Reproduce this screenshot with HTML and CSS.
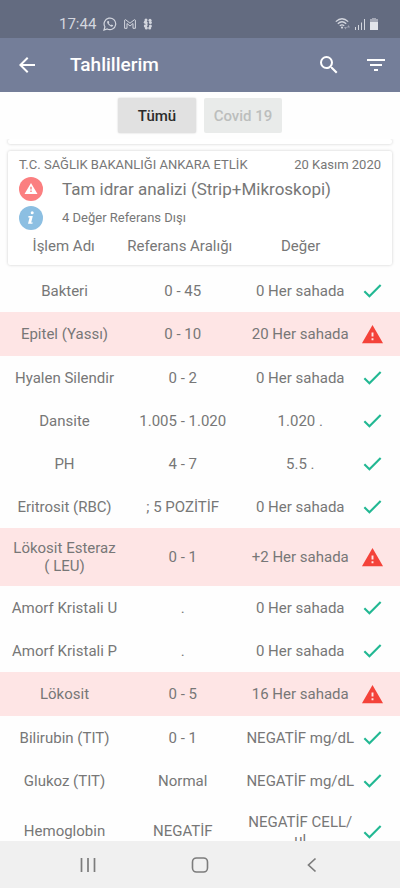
FILE: index.html
```
<!DOCTYPE html>
<html lang="tr">
<head>
    <meta charset="utf-8">
    <meta name="viewport" content="width=device-width, initial-scale=1">
    <title>Tahlillerim</title>
    <link rel="stylesheet" href="styles.css">
</head>

<body>
    <svg class="sprite" aria-hidden="true">
        <symbol id="check" viewBox="0 0 24 24">
            <path d="M3.500 12.800L8.800 18 20.500 6.300" fill="none" stroke="#22b893" stroke-width="2.200"/>
        </symbol>
        <symbol id="warning" viewBox="0 0 24 24">
            <path d="M1 21h22L12 2 1 21zm12-3h-2v-2h2v2zm0-4h-2v-4h2v4z" fill="#f4433a"/>
        </symbol>
    </svg>

    <div class="statusbar">
        <span class="time">17:44</span>
        <svg class="status-icon" width="14" height="14" viewBox="0 0 14 14">
            <path d="M1 13l.9-3.2A5.8 5.8 0 1 1 4.2 12z" fill="none" stroke="#d3d6de" stroke-width="1.2"/>
            <path d="M4.6 3.9c-.8.8-.6 2 .8 3.7 1.6 1.8 3.2 2.5 4.2 1.7.6-.5.6-.9.4-1.1L8.700 7.500l-.8.8C7 8 6 7 5.700 6.100l.6-.7-.6-1.500z" fill="#d3d6de"/>
        </svg>
        <svg class="status-icon" width="12" height="10" viewBox="0 0 12 10">
            <path d="M.6 9.300V1.200L1.600.7 6 4.200 10.400.7l1 .5v8.100H9V4.500L6 7 3 4.500v4.800z" fill="none" stroke="#d3d6de" stroke-width="1"/>
        </svg>
        <svg class="status-icon" width="10" height="12" viewBox="0 0 10 12">
            <g fill="#d3d6de">
                <circle cx="3" cy="2" r="1.500"/><circle cx="2.500" cy="4.300" r="1.700"/>
                <circle cx="7" cy="2.300" r="1.500"/><circle cx="7.400" cy="4.500" r="1.500"/>
                <circle cx="2.500" cy="8" r="1.700"/><circle cx="3.300" cy="10" r="1.500"/>
                <circle cx="7.400" cy="8" r="1.500"/><circle cx="6.700" cy="10" r="1.500"/>
                <rect x="3" y="4" width="1.500" height="4"/>
            </g>
        </svg>
        <svg class="status-right" width="44" height="14" viewBox="0 0 44 14">
            <g fill="none" stroke="#d3d6de" stroke-width="1.300">
                <path d="M.8 4.600Q7-1.200 13.200 4.600"/>
                <path d="M2.800 6.800Q7 2.800 11.200 6.800"/>
                <path d="M4.800 8.900Q7 6.800 9.200 8.900"/>
            </g>
            <circle cx="7" cy="10.600" r="1.100" fill="#d3d6de"/>
            <path d="M9 10h3l-1.500 2.500zM12 10.500h3L13.500 8z" fill="#9da2b2"/>
            <path d="M20 10h1v3h-1zM23 8h1v5h-1zM26 5.500h1V13h-1zM29 2h1v11h-1z" fill="#d3d6de"/>
            <path d="M35 2h2V1h4v1h2v3h-8z" fill="#a4a8b6"/>
            <path d="M35 5h8v8h-8z" fill="#e2e4ea"/>
        </svg>
    </div>

    <header class="appbar">
        <button type="button" class="icon-button" aria-label="Geri">
            <svg width="24" height="24" viewBox="0 0 24 24"><path d="M20 11H7.830l5.590-5.590L12 4l-8 8 8 8 1.410-1.410L7.830 13H20v-2z" fill="#fff"/></svg>
        </button>
        <h1>Tahlillerim</h1>
        <button type="button" class="icon-button" aria-label="Ara">
            <svg width="24" height="24" viewBox="0 0 24 24"><path d="M15.500 14h-.79l-.28-.27A6.470 6.470 0 0 0 16 9.500 6.500 6.500 0 1 0 9.500 16c1.610 0 3.090-.59 4.230-1.570l.27.28v.79l5 4.990L20.490 19l-4.990-5zm-6 0C7.010 14 5 11.990 5 9.500S7.010 5 9.500 5 14 7.010 14 9.500 11.990 14 9.500 14z" fill="#fff"/></svg>
        </button>
        <button type="button" class="icon-button" aria-label="Filtrele">
            <svg width="24" height="24" viewBox="0 0 24 24"><path d="M10 18h4v-2h-4v2zM3 6v2h18V6H3zm3 7h12v-2H6v2z" fill="#fff"/></svg>
        </button>
    </header>

    <div class="tabs">
        <button type="button" class="tab active">Tümü</button>
        <button type="button" class="tab">Covid 19</button>
    </div>

    <main class="list">
        <div class="card card-previous"></div>

        <section class="card">
            <div class="card-top">
                <span>T.C. SAĞLIK BAKANLIĞI ANKARA ETLİK</span>
                <span>20 Kasım 2020</span>
            </div>
            <div class="card-line">
                <svg width="24" height="24" viewBox="0 0 24 24">
                    <circle cx="12" cy="12" r="12" fill="#fb7f80"/>
                    <path d="M5.500 17h13L12 6zm7.200-2h-1.400v-1.400h1.400V15zm0-2.400h-1.400V9.800h1.400v2.800z" fill="#fff"/>
                </svg>
                <h2>Tam idrar analizi (Strip+Mikroskopi)</h2>
            </div>
            <div class="card-line">
                <svg width="24" height="24" viewBox="0 0 24 24">
                    <circle cx="12" cy="12" r="12" fill="#8cbfe2"/>
                    <circle cx="13.200" cy="6.800" r="1.500" fill="#fff"/>
                    <path d="M9.500 10h4.300l-1.600 6.400h1.600l-.4 1.400H9l1.600-6.400H9.200z" fill="#fff"/>
                </svg>
                <p>4 Değer Referans Dışı</p>
            </div>
            <table class="columns">
                <thead>
                    <tr><th scope="col">İşlem Adı</th><th scope="col">Referans Aralığı</th><th scope="col">Değer</th><td class="state"></td></tr>
                </thead>
            </table>
        </section>

        <table class="results">
            <tr><td>Bakteri</td><td>0 - 45</td><td>0 Her sahada</td><td class="state"><svg><use href="#check"/></svg></td></tr>
            <tr class="alert"><td>Epitel (Yassı)</td><td>0 - 10</td><td>20 Her sahada</td><td class="state"><svg><use href="#warning"/></svg></td></tr>
            <tr><td>Hyalen Silendir</td><td>0 - 2</td><td>0 Her sahada</td><td class="state"><svg><use href="#check"/></svg></td></tr>
            <tr><td>Dansite</td><td>1.005 - 1.020</td><td>1.020 .</td><td class="state"><svg><use href="#check"/></svg></td></tr>
            <tr><td>PH</td><td>4 - 7</td><td>5.5 .</td><td class="state"><svg><use href="#check"/></svg></td></tr>
            <tr><td>Eritrosit (RBC)</td><td>; 5 POZİTİF</td><td>0 Her sahada</td><td class="state"><svg><use href="#check"/></svg></td></tr>
            <tr class="alert"><td>Lökosit Esteraz<br>( LEU)</td><td>0 - 1</td><td>+2 Her sahada</td><td class="state"><svg><use href="#warning"/></svg></td></tr>
            <tr><td>Amorf Kristali U</td><td>.</td><td>0 Her sahada</td><td class="state"><svg><use href="#check"/></svg></td></tr>
            <tr><td>Amorf Kristali P</td><td>.</td><td>0 Her sahada</td><td class="state"><svg><use href="#check"/></svg></td></tr>
            <tr class="alert"><td>Lökosit</td><td>0 - 5</td><td>16 Her sahada</td><td class="state"><svg><use href="#warning"/></svg></td></tr>
            <tr><td>Bilirubin (TIT)</td><td>0 - 1</td><td>NEGATİF mg/dL</td><td class="state"><svg><use href="#check"/></svg></td></tr>
            <tr><td>Glukoz (TIT)</td><td>Normal</td><td>NEGATİF mg/dL</td><td class="state"><svg><use href="#check"/></svg></td></tr>
            <tr><td>Hemoglobin</td><td>NEGATİF</td><td>NEGATİF CELL/<br>ul</td><td class="state"><svg><use href="#check"/></svg></td></tr>
        </table>
    </main>

    <nav class="navbar">
        <button type="button" class="icon-button" aria-label="Son uygulamalar">
            <svg width="24" height="24" viewBox="0 0 24 24"><path d="M5.500 5v14M12 5v14M18.500 5v14" stroke="#7c7c7c" stroke-width="1.700"/></svg>
        </button>
        <button type="button" class="icon-button" aria-label="Ana ekran">
            <svg width="24" height="24" viewBox="0 0 24 24"><rect x="4.500" y="5" width="15" height="14" rx="4" fill="none" stroke="#7c7c7c" stroke-width="1.600"/></svg>
        </button>
        <button type="button" class="icon-button" aria-label="Geri dön">
            <svg width="24" height="24" viewBox="0 0 24 24"><path d="M15.500 5.500L8.500 12l7 6.500" fill="none" stroke="#7c7c7c" stroke-width="1.700"/></svg>
        </button>
    </nav>
</body>
</html>
```

FILE: styles.css
```
* {
    margin: 0;
    padding: 0;
    box-sizing: border-box;
    font-family: Roboto, sans-serif;
}

body {
    height: 100vh;
    display: flex;
    flex-direction: column;
    background: #fefefe;
    color: #777;
    font-size: 15px;
    line-height: 18px;
    overflow: hidden;
}

svg {
    display: block;
    flex: none;
}
.sprite {
    display: none;
}

button {
    border: none;
    background: transparent;
    cursor: pointer;
}

.statusbar {
    display: flex;
    align-items: center;
    gap: 7px;
    flex: none;
    height: 38px;
    padding: 10px 21px 0 59px;
    background: #636b80;
    color: #d3d6de;
}
.status-right {
    margin-left: auto;
}

.appbar {
    display: flex;
    align-items: center;
    gap: 23px;
    flex: none;
    height: 54px;
    padding: 0 12px 0 15px;
    background: #747e99;
    color: #fff;
}
.appbar h1 {
    flex: 1;
    padding-left: 8px;
    font-size: 19px;
    font-weight: 500;
}

.tabs {
    display: flex;
    justify-content: center;
    gap: 8px;
    flex: none;
    padding: 6px 0;
}
.tab {
    width: 78px;
    height: 35px;
    border-radius: 2px;
    background: #e9ebea;
    color: #bcbebd;
    font-size: 15px;
    font-weight: 500;
}
.tab.active {
    background: #e1e1e1;
    color: #2b2b2b;
    box-shadow: 0 0 2px #ccc;
}

.list {
    flex: 1;
    min-height: 0;
    overflow-y: auto;
    scrollbar-width: none;
}
.card {
    margin: 0 8px 4px;
    padding: 5px 0 6px;
    border-radius: 2px;
    box-shadow: 0 0 3px #ccc;
    background: #fff;
}
.card-previous {
    height: 5px;
    padding: 0;
    margin-bottom: 7px;
}
.card-top {
    display: flex;
    justify-content: space-between;
    padding: 0 11px;
    font-size: 13px;
}
.card-line {
    display: flex;
    align-items: center;
    gap: 19px;
    height: 28px;
    padding: 0 11px;
}
.card-top + .card-line {
    height: 30px;
}
.card-line h2 {
    font-size: 17px;
    font-weight: 400;
}
.card-line p {
    font-size: 13px;
}

table {
    width: 100%;
    table-layout: fixed;
    border-collapse: collapse;
    text-align: center;
}
th {
    font-weight: 400;
}
.columns {
    height: 27px;
}
.columns th:first-child {
    width: 29%;
}
.columns .state {
    width: 31px;
}

.results tr {
    height: 43px;
}
.results td {
    padding: 11px 0;
}
.results td:first-child {
    width: 31%;
    padding-left: 5px;
}
.results .alert {
    height: 44px;
    background: #fee5e5;
}
.results .state {
    width: 41px;
    padding: 0 0 0 2px;
}
.state svg {
    width: 23px;
    height: 23px;
}

.navbar {
    display: flex;
    justify-content: center;
    gap: 88px;
    flex: none;
    height: 47px;
    background: #f0f0f0;
}
```
